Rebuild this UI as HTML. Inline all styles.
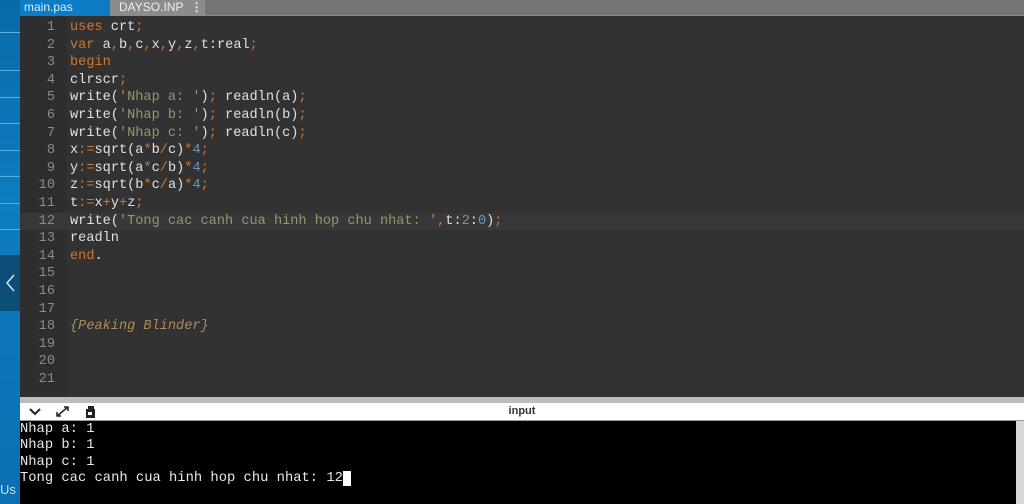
<!DOCTYPE html>
<html><head><style>
*{margin:0;padding:0;box-sizing:border-box}
body{width:1024px;height:504px;overflow:hidden;background:#323232;position:relative;font-family:"Liberation Mono",monospace}
#side{position:absolute;left:0;top:0;width:20px;height:504px;background:linear-gradient(#0a6aa8,#0d7cc0 40%,#0b6fb0)}
#side i{position:absolute;left:0;width:20px;height:1px;background:#5aaee0}
#btn{position:absolute;left:0;top:255px;width:20px;height:56px;background:#0e4d78}
#us{position:absolute;left:0;top:482px;color:#bfe0f5;font:13px "Liberation Sans",sans-serif}
#tabs{position:absolute;left:20px;top:0;width:1004px;height:16px;background:#747474;border-bottom:1px solid #8a8a8a}
.tab{position:absolute;top:0;height:16px;font:12px "Liberation Sans",sans-serif;line-height:14px;padding-left:4px}
#gut{position:absolute;left:20px;top:17px;width:47px;height:380px;background:#2e2e2e}
#code{position:absolute;left:20px;top:19px;width:1004px;font-size:13.6px;line-height:17.6px;color:#e0e0e0}
.l{height:17.6px;white-space:pre;position:relative}
.l b{font-weight:normal;display:inline-block;width:35px;text-align:right;color:#8a8a8a;margin-right:15px}
.k{color:#cc7832}.s{color:#8f9a6a}.n{color:#6897bb}.c{color:#b08a5a;font-style:italic}.o{color:#cc7832}
.hl{background:#383838}
#bar1{position:absolute;left:20px;top:397px;width:1004px;height:6px;background:#bdbdbd}
#bar2{position:absolute;left:20px;top:403px;width:1004px;height:18px;background:#fff;border-bottom:1px solid #999}
#term{position:absolute;left:20px;top:421px;width:996px;height:83px;background:#000;color:#e8e8e8;font-size:13.8px;line-height:16.3px;padding-top:1px;white-space:pre}
#sb{position:absolute;left:1016px;top:421px;width:8px;height:83px;background:#d8d8d8}
</style></head><body>
<div id="side"><i style="top:32px"></i><i style="top:70px"></i><i style="top:97px"></i><i style="top:123px"></i><i style="top:150px"></i><i style="top:176px"></i><i style="top:203px"></i><i style="top:229px"></i></div>
<div id="btn"><svg width="20" height="56"><path d="M14 20 L7 28 L14 36" stroke="#cfe6f5" stroke-width="1.5" fill="none"/></svg></div>
<div id="us">Us</div>
<div id="tabs">
<div class="tab" style="left:0;width:90px;background:#0e7cc4;color:#d8ecf8">main.pas</div>
<div class="tab" style="left:90px;width:95px;background:#8c8c8c;color:#eee;padding-left:9px">DAYSO.INP <span style="font-weight:bold;margin-left:4px">&#8942;</span></div>
</div>
<div id="gut"></div>
<div id="code">
<div class="l"><b>1</b><span class="k">uses</span> crt<span class="o">;</span></div>
<div class="l"><b>2</b><span class="k">var</span> a<span class="o">,</span>b<span class="o">,</span>c<span class="o">,</span>x<span class="o">,</span>y<span class="o">,</span>z<span class="o">,</span>t:real<span class="o">;</span></div>
<div class="l"><b>3</b><span class="k">begin</span></div>
<div class="l"><b>4</b>clrscr<span class="o">;</span></div>
<div class="l"><b>5</b>write(<span class="s">'Nhap a: '</span>)<span class="o">;</span> readln(a)<span class="o">;</span></div>
<div class="l"><b>6</b>write(<span class="s">'Nhap b: '</span>)<span class="o">;</span> readln(b)<span class="o">;</span></div>
<div class="l"><b>7</b>write(<span class="s">'Nhap c: '</span>)<span class="o">;</span> readln(c)<span class="o">;</span></div>
<div class="l"><b>8</b>x<span class="o">:=</span>sqrt(a<span class="o">*</span>b<span class="o">/</span>c)<span class="o">*</span><span class="n">4</span><span class="o">;</span></div>
<div class="l"><b>9</b>y<span class="o">:=</span>sqrt(a<span class="o">*</span>c<span class="o">/</span>b)<span class="o">*</span><span class="n">4</span><span class="o">;</span></div>
<div class="l"><b>10</b>z<span class="o">:=</span>sqrt(b<span class="o">*</span>c<span class="o">/</span>a)<span class="o">*</span><span class="n">4</span><span class="o">;</span></div>
<div class="l"><b>11</b>t<span class="o">:=</span>x<span class="o">+</span>y<span class="o">+</span>z<span class="o">;</span></div>
<div class="l hl"><b>12</b>write(<span class="s">'Tong cac canh cua hinh hop chu nhat: '</span><span class="o">,</span>t:<span class="n">2</span>:<span class="n">0</span>)<span class="o">;</span></div>
<div class="l"><b>13</b>readln</div>
<div class="l"><b>14</b><span class="k">end</span>.</div>
<div class="l"><b>15</b></div>
<div class="l"><b>16</b></div>
<div class="l"><b>17</b></div>
<div class="l"><b>18</b><span class="c">{Peaking Blinder}</span></div>
<div class="l"><b>19</b></div>
<div class="l"><b>20</b></div>
<div class="l"><b>21</b></div>
</div>
<div id="bar1"></div>
<div id="bar2">
<svg width="90" height="18" style="position:absolute;left:6px;top:0">
<path d="M4 6 L9 11 L14 6" stroke="#222" stroke-width="2" fill="none"/>
<path d="M31 13 L42 4 M38 4 L42 4 L42 8 M31 9 L31 13 L35 13" stroke="#222" stroke-width="1.5" fill="none"/>
<rect x="60" y="6" width="9" height="9" fill="#222"/><rect x="62" y="3" width="6" height="4" fill="#222"/><rect x="62" y="9" width="4" height="3" fill="#fff"/>
</svg>
<div style="position:absolute;left:0;width:1004px;text-align:center;font:bold 11px 'Liberation Sans',sans-serif;color:#333;line-height:17px">input</div>
</div>
<div id="term">Nhap a: 1
Nhap b: 1
Nhap c: 1
Tong cac canh cua hinh hop chu nhat: 12<span style="background:#fff">&nbsp;</span></div>
<div id="sb"></div>
</body></html>
